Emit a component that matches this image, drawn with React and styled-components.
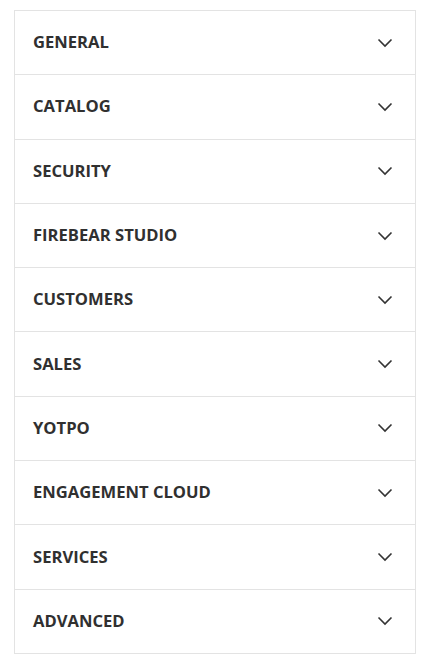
import React from "react";
import styled, { createGlobalStyle } from "styled-components";

const GlobalStyle = createGlobalStyle`
  body {
    margin: 0;
    background: #ffffff;
    font-family: "Open Sans", "Liberation Sans", sans-serif;
  }
`;

const sections = [
  "General",
  "Catalog",
  "Security",
  "Firebear Studio",
  "Customers",
  "Sales",
  "Yotpo",
  "Engagement Cloud",
  "Services",
  "Advanced",
];

function Chevron() {
  return (
    <svg width="16" height="10" viewBox="0 0 16 10" fill="none">
      <path d="M1.5 1.5 L8 8 L14.5 1.5" stroke="#333" strokeWidth="1.6" />
    </svg>
  );
}

function App() {
  return (
    <>
      <GlobalStyle />
      <Page>
        <Panel>
          {sections.map((name) => (
            <Row key={name}>
              <Title>{name}</Title>
              <Chevron />
            </Row>
          ))}
        </Panel>
      </Page>
    </>
  );
}

const Page = styled.div`
  padding: 10px 6px 0 14px;
`;

const Panel = styled.div`
  width: 400px;
  border: 1px solid #e3e3e3;
  border-top: none;
`;

const Row = styled.div`
  display: flex;
  align-items: center;
  justify-content: space-between;
  height: 63.3px;
  padding: 0 22px 0 18px;
  border-top: 1px solid #e3e3e3;
`;

const Title = styled.span`
  font-size: 16.6px;
  font-weight: 700;
  text-transform: uppercase;
  color: #303030;
  margin-top: -2px;
`;

export default App;
